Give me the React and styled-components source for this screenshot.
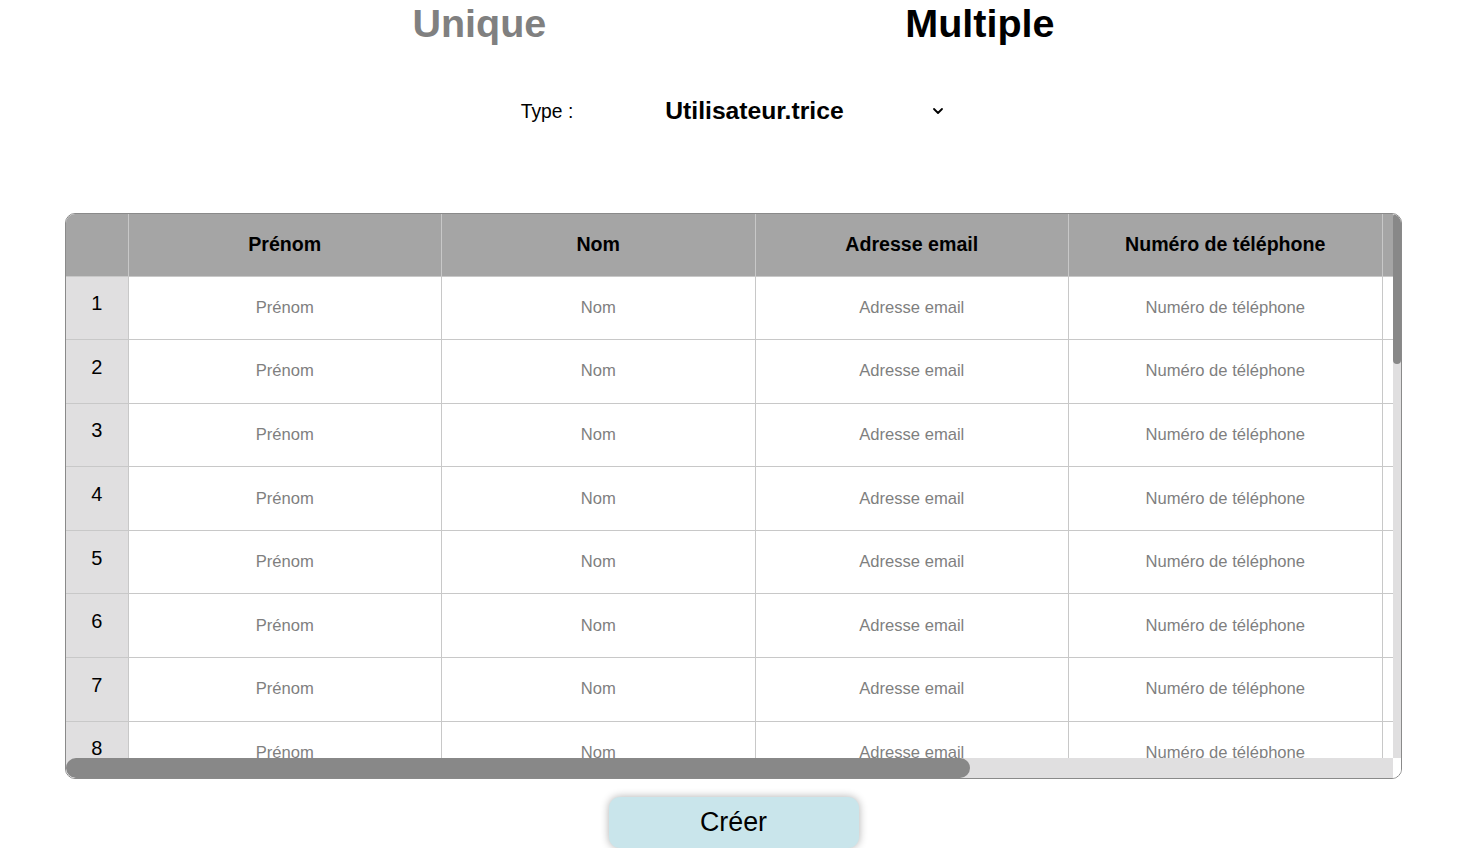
import React from "react";
import styled, { createGlobalStyle } from "styled-components";

const Global = createGlobalStyle`
  html, body { margin: 0; padding: 0; background: #ffffff; }
  body { font-family: "Liberation Sans", Arial, sans-serif; color: #000; }
  * { box-sizing: border-box; }
`;

const Page = styled.main`
  width: 1337px;
  margin-left: 65px;
  display: flex;
  flex-direction: column;
  align-items: center;
`;

const Tabs = styled.nav`
  display: flex;
  justify-content: center;
  gap: 359px;
  height: 46px;
`;

const Tab = styled.h1`
  margin: 0;
  font-size: 39.5px;
  line-height: 46px;
  font-weight: 700;
  color: ${(p) => (p.$active ? "#000000" : "#808080")};
  cursor: pointer;
`;

const TypeRow = styled.div`
  margin-top: 42px;
  display: flex;
  align-items: center;
  gap: 92px;
  height: 46px;
`;

const TypeLabel = styled.label`
  font-size: 19.3px;
  padding-top: 1px;
  color: #000;
`;

const SelectBox = styled.div`
  width: 281px;
  display: flex;
  align-items: center;
  justify-content: space-between;
  font-size: 24.7px;
  font-weight: 700;
  color: #000;
`;

const Chevron = styled.svg`
  width: 12px;
  height: 8px;
  margin-right: 2px;
  margin-top: 0px;
`;

const TableFrame = styled.div`
  margin-top: 79px;
  width: 1337px;
  height: 566px;
  border: 1px solid #8a8a8a;
  border-radius: 10px;
  overflow: hidden;
  align-self: flex-start;
  display: grid;
  grid-template-columns: 1fr 8px;
  grid-template-rows: 1fr 20px;
  background: #ffffff;
`;

const Viewport = styled.div`
  overflow: hidden;
  min-width: 0;
  min-height: 0;
`;

const VTrack = styled.div`
  background: #e0dfe0;
  margin-top: -1px;
  display: flex;
  flex-direction: column;
`;

const VThumb = styled.div`
  height: 151px;
  background: #888888;
  border-radius: 5px;
`;

const HTrack = styled.div`
  background: #e0dfe0;
  display: flex;
`;

const HThumb = styled.div`
  width: 904px;
  background: #888888;
  border-radius: 10px;
`;

const Corner = styled.div`
  background: #ffffff;
`;

const Table = styled.table`
  border-collapse: collapse;
  table-layout: fixed;
  width: 1630px;
`;

const HeadCell = styled.th`
  width: ${(p) => (p.$index ? "62px" : "313.5px")};
  height: 62px;
  background: #a5a5a5;
  border-right: 1px solid #c8c8c8;
  border-bottom: 1px solid #c8c8c8;
  font-size: 19.6px;
  font-weight: 700;
  color: #000;
  text-align: center;
  vertical-align: middle;
  padding: 0 4px;
`;

const Row = styled.tr`
  height: 63.6px;
`;

const IndexCell = styled.td`
  background: #e0dfe0;
  border-right: 1px solid #c8c8c8;
  border-bottom: 1px solid #c8c8c8;
  text-align: center;
  vertical-align: middle;
  font-size: 20px;
  padding: 0 0 8px 0;
  color: #000;
`;

const DataCell = styled.td`
  border-right: 1px solid #c8c8c8;
  border-bottom: 1px solid #c8c8c8;
  padding: 0;
  vertical-align: middle;
`;

const CellInput = styled.input`
  width: 100%;
  border: none;
  outline: none;
  background: transparent;
  text-align: center;
  font-family: "Liberation Sans", Arial, sans-serif;
  font-size: 16.6px;
  color: #000;
  padding: 0;
  &::placeholder {
    color: #7f7f7f;
  }
`;

const CreateButton = styled.button`
  margin-top: 18px;
  width: 250px;
  height: 51px;
  border: none;
  border-radius: 11px;
  background: #c9e5eb;
  box-shadow: 0 0 9px rgba(0, 0, 0, 0.32);
  font-family: "Liberation Sans", Arial, sans-serif;
  font-size: 26.8px;
  color: #000;
  cursor: pointer;
  padding: 0;
`;

const columns = ["Prénom", "Nom", "Adresse email", "Numéro de téléphone"];

const rows = Array.from({ length: 8 }, (_, i) => i + 1);

export default function App() {
  return (
    <>
      <Global />
      <Page>
        <Tabs>
          <Tab>Unique</Tab>
          <Tab $active>Multiple</Tab>
        </Tabs>
        <TypeRow>
          <TypeLabel>Type :</TypeLabel>
          <SelectBox>
            <span>Utilisateur.trice</span>
            <Chevron viewBox="0 0 12 8" fill="none">
              <polyline
                points="2,2 6,6 10,2"
                stroke="#000"
                strokeWidth="1.8"
                strokeLinecap="round"
                strokeLinejoin="round"
              />
            </Chevron>
          </SelectBox>
        </TypeRow>
        <TableFrame>
          <Viewport>
            <Table>
              <thead>
                <tr>
                  <HeadCell $index />
                  {columns.map((c) => (
                    <HeadCell key={c}>{c}</HeadCell>
                  ))}
                  <HeadCell />
                </tr>
              </thead>
              <tbody>
                {rows.map((n) => (
                  <Row key={n}>
                    <IndexCell>{n}</IndexCell>
                    {columns.map((c) => (
                      <DataCell key={c}>
                        <CellInput placeholder={c} />
                      </DataCell>
                    ))}
                    <DataCell />
                  </Row>
                ))}
              </tbody>
            </Table>
          </Viewport>
          <VTrack>
            <VThumb />
          </VTrack>
          <HTrack>
            <HThumb />
          </HTrack>
          <Corner />
        </TableFrame>
        <CreateButton>Créer</CreateButton>
      </Page>
    </>
  );
}
